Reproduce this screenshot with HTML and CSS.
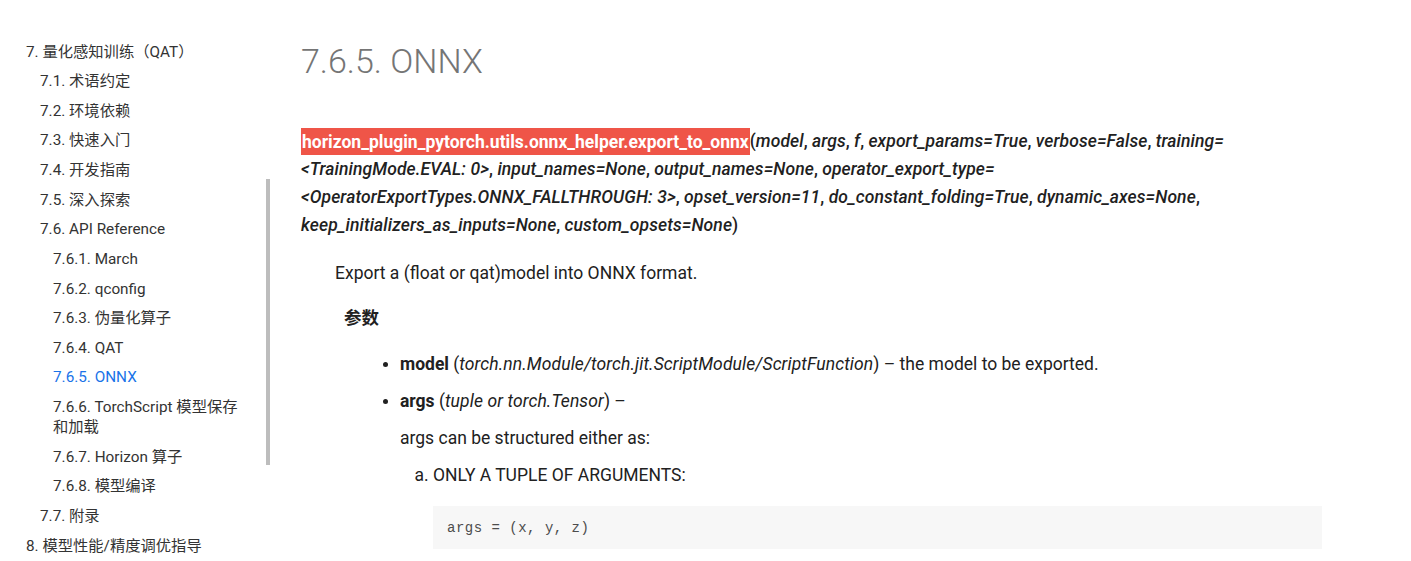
FILE: index.html
```html
<!DOCTYPE html>
<html lang="zh">
<head>
<meta charset="utf-8">
<title>7.6.5. ONNX</title>
<link rel="stylesheet" href="styles.css">
</head>
<body>
<div class="page">
  <nav class="sidebar">
    <ul class="toc toc-l1">
      <li><a href="#">7. 量化感知训练（QAT）</a>
        <ul class="toc toc-l2">
          <li><a href="#">7.1. 术语约定</a></li>
          <li><a href="#">7.2. 环境依赖</a></li>
          <li><a href="#">7.3. 快速入门</a></li>
          <li><a href="#">7.4. 开发指南</a></li>
          <li><a href="#">7.5. 深入探索</a></li>
          <li><a href="#">7.6. API Reference</a>
            <ul class="toc toc-l3">
              <li><a href="#">7.6.1. March</a></li>
              <li><a href="#">7.6.2. qconfig</a></li>
              <li><a href="#">7.6.3. 伪量化算子</a></li>
              <li><a href="#">7.6.4. QAT</a></li>
              <li><a href="#" class="active">7.6.5. ONNX</a></li>
              <li><a href="#">7.6.6. TorchScript 模型保存和加载</a></li>
              <li><a href="#">7.6.7. Horizon 算子</a></li>
              <li><a href="#">7.6.8. 模型编译</a></li>
            </ul>
          </li>
          <li><a href="#">7.7. 附录</a></li>
        </ul>
      </li>
      <li><a href="#">8. 模型性能/精度调优指导</a></li>
    </ul>
    <div class="scroll-thumb"></div>
  </nav>

  <main class="content">
    <h1 class="title">7.6.5. ONNX</h1>
    <dl class="api">
      <dt class="sig"><span class="sig-name">horizon_plugin_pytorch.utils.onnx_helper.export_to_onnx</span><span class="paren">(</span><em>model</em>, <em>args</em>, <em>f</em>, <em>export_params=True</em>, <em>verbose=False</em>, <em>training=</em><wbr><em>&lt;TrainingMode.EVAL: 0&gt;</em>, <em>input_names=None</em>, <em>output_names=None</em>, <em>operator_export_type=</em><wbr><em>&lt;OperatorExportTypes.ONNX_FALLTHROUGH: 3&gt;</em>, <em>opset_version=11</em>, <em>do_constant_folding=True</em>, <em>dynamic_axes=None</em>, <em>keep_initializers_as_inputs=None</em>, <em>custom_opsets=None</em><span class="paren">)</span></dt>
      <dd class="api-body">
        <p class="desc">Export a (float or qat)model into ONNX format.</p>
        <dl class="fields">
          <dt class="field-name">参数</dt>
          <dd class="field-body">
            <ul class="params">
              <li><p class="param"><strong>model</strong> (<em>torch.nn.Module/torch.jit.ScriptModule/ScriptFunction</em>) – the model to be exported.</p></li>
              <li>
                <p class="param"><strong>args</strong> (<em>tuple or torch.Tensor</em>) –</p>
                <p class="param">args can be structured either as:</p>
                <ol class="alpha">
                  <li>
                    <p class="param">ONLY A TUPLE OF ARGUMENTS:</p>
                    <pre class="code">args = (x, y, z)</pre>
                  </li>
                </ol>
              </li>
            </ul>
          </dd>
        </dl>
      </dd>
    </dl>
  </main>
</div>
</body>
</html>
```
FILE: styles.css
```css
html, body {
  margin: 0;
  padding: 0;
  background: #ffffff;
}

body {
  font-family: Roboto, "Noto Sans CJK SC", sans-serif;
  color: #212121;
  overflow: hidden;
}

.page {
  display: flex;
  align-items: flex-start;
  height: 561px;
  overflow: hidden;
}

/* ---------- Sidebar ---------- */
.sidebar {
  position: relative;
  flex: 0 0 270px;
  box-sizing: border-box;
  padding: 36.7px 24px 0 26px;
  height: 561px;
}

.toc {
  list-style: none;
  margin: 0;
  padding: 0;
}

.toc-l2 {
  padding-left: 14px;
}

.toc-l3 {
  padding-left: 13px;
}

.toc a {
  display: block;
  padding: 4.82px 0;
  font-size: 15.3px;
  line-height: 20px;
  color: #333333;
  text-decoration: none;
}

.toc a.active {
  color: #1a73e8;
}

.scroll-thumb {
  position: absolute;
  left: 266px;
  top: 179px;
  width: 4px;
  height: 286px;
  background: #bdbdbd;
}

/* ---------- Content ---------- */
.content {
  flex: 1 1 auto;
  box-sizing: border-box;
  padding: 40px 89px 0 31px;
  min-width: 0;
}

.title {
  margin: 0;
  font-size: 34px;
  line-height: 42px;
  font-weight: 300;
  color: #757575;
}

.api {
  margin: 45px 0 0 0;
}

.sig {
  font-size: 17.5px;
  line-height: 28px;
  font-weight: 500;
  color: #212121;
}

.sig em {
  font-style: italic;
  letter-spacing: 0.1px;
}

.sig-name {
  background: #ef5548;
  color: #ffffff;
  font-weight: 700;
  padding: 3.5px 1px;
}

.api-body {
  margin: 19.5px 0 0 34px;
}

.desc {
  margin: 0;
  font-size: 17.5px;
  line-height: 28px;
}

.fields {
  margin: 17.5px 0 0 9px;
}

.field-name {
  font-size: 17.5px;
  line-height: 28px;
  font-weight: 700;
}

.field-body {
  margin: 18px 0 0 0;
}

.params {
  margin: 0;
  padding-left: 56px;
  list-style: disc;
}

.param {
  margin: 0 0 9px 0;
  font-size: 17.5px;
  line-height: 28px;
}

.param em {
  letter-spacing: 0.1px;
}

.params li {
  margin: 0 0 9px 0;
}

.alpha {
  margin: 0;
  padding-left: 33px;
  list-style: lower-alpha;
  font-size: 17.5px;
}

.alpha .param {
  margin-bottom: 17px;
}

.code {
  margin: 0;
  padding: 11.5px 14px;
  background: #f7f7f7;
  font-family: "Liberation Mono", monospace;
  font-size: 14px;
  line-height: 20px;
  letter-spacing: 0.5px;
  color: #4d4d4d;
}
```
